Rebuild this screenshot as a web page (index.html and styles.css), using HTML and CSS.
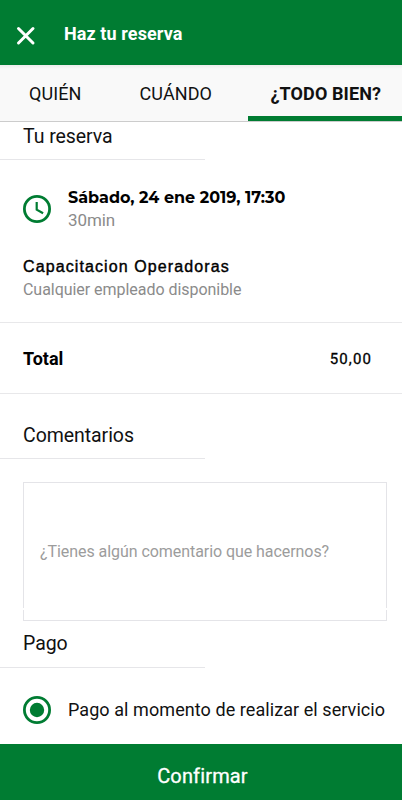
FILE: index.html
```html
<!DOCTYPE html>
<html lang="es">
<head>
<meta charset="utf-8">
<meta name="viewport" content="width=device-width, initial-scale=1">
<title>Haz tu reserva</title>
<link rel="stylesheet" href="styles.css">
</head>
<body>
<div class="app">
  <header class="topbar">
    <svg class="close" viewBox="0 0 20 20" aria-hidden="true"><path d="M2.5 2.5 17 17M17 2.5 2.5 17"/></svg>
    <h1>Haz tu reserva</h1>
  </header>
  <nav class="tabs">
    <a class="tab-who">QUIÉN</a>
    <a class="tab-when">CUÁNDO</a>
    <a class="tab-review">¿TODO BIEN?</a>
  </nav>
  <main>
    <h2 class="title title-booking">Tu reserva</h2>
    <section class="booking">
      <div class="when">
        <svg class="icon" viewBox="0 0 28 28" aria-hidden="true"><circle cx="14" cy="14" r="12.6"/><path class="hands" d="M13.7 6.9v7.7l6.4 3.7"/></svg>
        <div>
          <p class="date">Sábado, 24 ene 2019, 17:30</p>
          <p class="muted duration">30min</p>
        </div>
      </div>
      <p class="service">Capacitacion Operadoras</p>
      <p class="muted staff">Cualquier empleado disponible</p>
    </section>
    <section class="total">
      <strong>Total</strong>
      <span class="amount">50,00</span>
    </section>
    <h2 class="title title-comments">Comentarios</h2>
    <div class="comment">¿Tienes algún comentario que hacernos?</div>
    <h2 class="title title-pay">Pago</h2>
    <div class="option">
      <svg class="icon" viewBox="0 0 28 28" aria-hidden="true"><circle cx="14" cy="14" r="12.6"/><circle class="dot" cx="14" cy="14" r="7.2"/></svg>
      <span class="option-label">Pago al momento de realizar el servicio</span>
    </div>
  </main>
  <button class="confirm">Confirmar</button>
</div>
</body>
</html>
```
FILE: styles.css
```css
* { box-sizing: border-box; }
body { margin: 0; background: #fff; }
h1, h2, p { margin: 0; font-weight: 400; }

.app {
  display: flex;
  flex-direction: column;
  width: 402px;
  height: 800px;
  overflow: hidden;
  font-family: Roboto, "Liberation Sans", sans-serif;
  color: #111;
}

.topbar {
  flex: none;
  display: flex;
  align-items: center;
  height: 65px;
  padding: 6px 16px 0;
  background: #007c32;
  color: #fff;
}
.close {
  width: 20px;
  height: 20px;
  fill: none;
  stroke: #fff;
  stroke-width: 3;
  stroke-linecap: round;
}
.topbar h1 {
  margin: -4px 0 0 28px;
  font-size: 18px;
  font-weight: 700;
  line-height: 24px;
  letter-spacing: 0.1px;
}

.tabs {
  flex: none;
  display: flex;
  height: 57px;
  background: linear-gradient(#ececec, #f9f9f9 4px);
  border-bottom: 1px solid #ccc;
  font-size: 18px;
  line-height: 58px;
  letter-spacing: 0.1px;
}
.tab-who { width: 111px; padding-left: 29px; }
.tab-when { width: 137px; padding-left: 28.5px; }
.tab-review {
  width: 154px;
  height: 56px;
  padding-left: 22.5px;
  border-bottom: 5px solid #007c32;
  font-weight: 700;
}

main { flex: 1; }
.title {
  width: 205px;
  padding-left: 23px;
  border-bottom: 1px solid #e6e6e9;
  font-size: 19.5px;
  line-height: 24px;
  letter-spacing: -0.06px;
}
.title-booking { height: 38px; padding-top: 3px; }
.title-comments { height: 65px; padding-top: 30px; }
.title-pay { height: 47px; padding-top: 11px; }

.booking {
  height: 163px;
  padding: 27px 23px 0;
  border-bottom: 1px solid #e8e8ea;
}
.when { display: flex; gap: 17px; }
.icon {
  flex: none;
  width: 28px;
  height: 28px;
  fill: none;
  stroke: #007c32;
  stroke-width: 2.8;
}
.when .icon { margin-top: 7.5px; }
.hands { stroke-width: 2.2; }
.dot { fill: #007c32; stroke: none; }
.date {
  font-family: Montserrat, Inter, sans-serif;
  font-size: 16px;
  font-weight: 700;
  line-height: 22px;
  color: #000;
}
.muted { color: #8b8b8b; font-size: 16px; line-height: 22px; }
.duration { font-size: 17px; line-height: 23px; letter-spacing: -0.1px; }
.service {
  margin-top: 24px;
  font-family: "Liberation Sans", Arial, sans-serif;
  font-size: 16px;
  line-height: 22px;
  letter-spacing: 1.1px;
  -webkit-text-stroke: 0.4px #000;
  color: #000;
}
.staff { line-height: 24px; letter-spacing: -0.04px; }

.total {
  display: flex;
  align-items: center;
  justify-content: space-between;
  height: 71px;
  padding: 1px 30px 0 23px;
  border-bottom: 1px solid #e8e8ea;
  font-size: 18px;
  color: #000;
}
.amount {
  font-size: 15px;
  font-weight: 400;
  letter-spacing: 1.1px;
  -webkit-text-stroke: 0.3px #000;
}

.comment {
  position: relative;
  width: 364px;
  height: 139px;
  margin: 23px 0 0 23px;
  padding-left: 16px;
  border: 1px solid #e4e4e8;
  font-size: 16px;
  line-height: 138px;
  letter-spacing: -0.06px;
  color: #9c9c9c;
}
/* Small break in both side borders near the bottom corners */
.comment::after {
  content: "";
  position: absolute;
  left: -1px;
  right: -1px;
  bottom: 10px;
  height: 2px;
  background: #fff;
}

.option {
  display: flex;
  align-items: center;
  gap: 17px;
  height: 28px;
  margin: 28px 0 0 23px;
  font-size: 18px;
  letter-spacing: 0.07px;
  white-space: nowrap;
}
.option-label { padding-bottom: 1px; }

.confirm {
  flex: none;
  height: 56px;
  padding: 8px 0 0 3px;
  border: 0;
  background: #007c32;
  color: #fff;
  font: 400 20px/24px Roboto, "Liberation Sans", sans-serif;
  letter-spacing: 0.15px;
  -webkit-text-stroke: 0.3px #fff;
}
```
